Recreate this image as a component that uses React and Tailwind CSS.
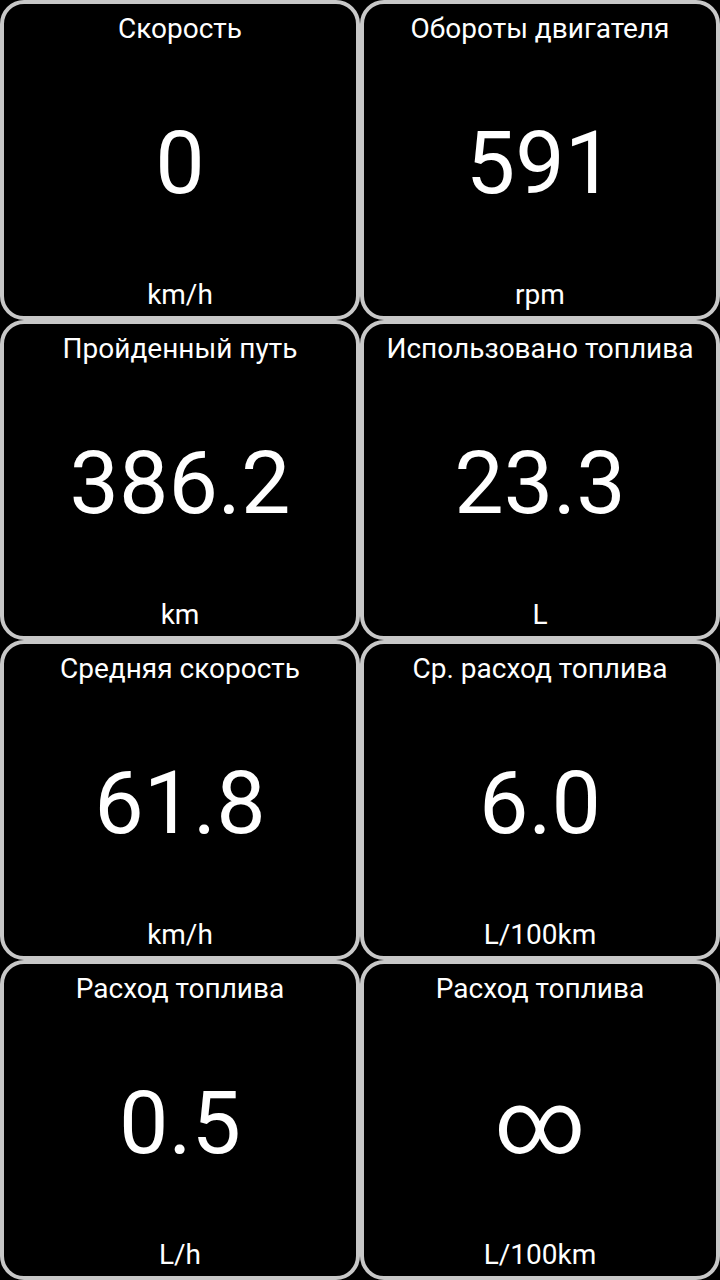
const cells = [
  { title: "Скорость", value: "0", unit: "km/h" },
  { title: "Обороты двигателя", value: "591", unit: "rpm" },
  { title: "Пройденный путь", value: "386.2", unit: "km" },
  { title: "Использовано топлива", value: "23.3", unit: "L" },
  { title: "Средняя скорость", value: "61.8", unit: "km/h" },
  { title: "Ср. расход топлива", value: "6.0", unit: "L/100km" },
  { title: "Расход топлива", value: "0.5", unit: "L/h" },
  { title: "Расход топлива", value: "∞", unit: "L/100km" },
];

function Cell({ title, value, unit }) {
  return (
    <div className="flex flex-col items-center h-[320px] rounded-[24px] border-4 border-[#c8c8c8] bg-black text-white">
      <div className="pt-[11px] text-[28px] leading-[28px] whitespace-nowrap">{title}</div>
      <div className="flex flex-1 items-center justify-center pt-[2px] text-[88px] leading-[88px]">{value}</div>
      <div className="pb-[7px] text-[28px] leading-[28px] whitespace-nowrap">{unit}</div>
    </div>
  );
}

export default function App() {
  return (
    <div
      className="grid grid-cols-2 w-[720px] h-[1280px] bg-black overflow-hidden"
      style={{ fontFamily: "Roboto, 'Noto Sans', sans-serif" }}
    >
      {cells.map((c, i) => (
        <Cell key={i} {...c} />
      ))}
    </div>
  );
}
